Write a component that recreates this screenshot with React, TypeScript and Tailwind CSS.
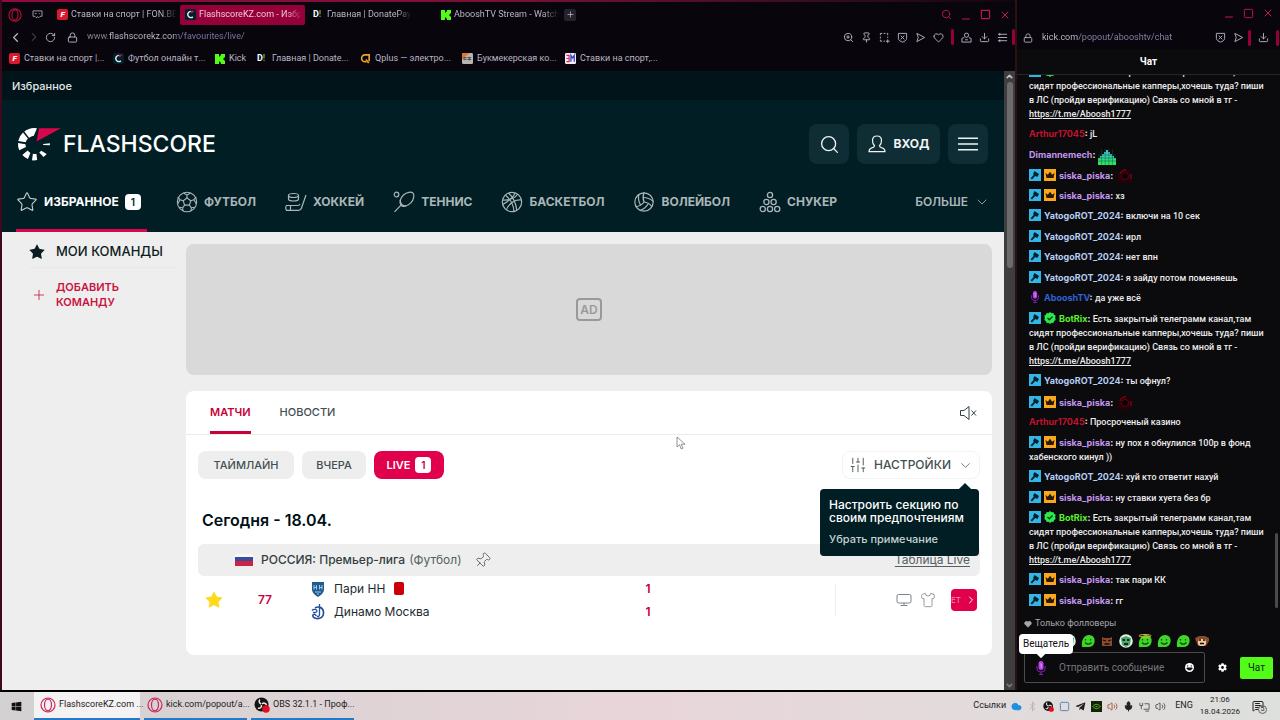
import type { ReactNode } from "react";
import {
  Bluetooth,
  ChevronDown,
  ChevronLeft,
  ChevronRight,
  ChevronUp,
  Cloud,
  Download,
  Heart,
  Lock,
  Menu,
  MessageSquareText,
  Mic,
  Minus,
  Pin,
  Plus,
  RotateCw,
  Search,
  Shirt,
  SlidersVertical,
  Square,
  Star,
  Volleyball,
  Volume2,
  X,
  ZoomIn,
} from "lucide-react";
import { FaCog, FaTelegramPlane, FaWindows } from "react-icons/fa";

/* ---------- small drawings ---------- */

function FonIcon() {
  return (
    <span className="grid size-[11px] shrink-0 place-items-center rounded-xs bg-[#d91a2e] text-[8px] leading-none font-black text-white italic">
      F
    </span>
  );
}

function FlashIcon() {
  return (
    <svg viewBox="0 0 12 12" className="size-[11px] shrink-0">
      <rect width="12" height="12" rx="2" fill="#00202a" />
      <path d="M8.6 8.6A3.4 3.4 0 1 1 6.4 2.6" fill="none" stroke="#dfe8ea" strokeWidth="1.6" />
      <path d="M6.5 2h4L7 5z" fill="#d5174f" />
    </svg>
  );
}

function DonateIcon() {
  return (
    <span className="flex w-[11px] shrink-0 text-[9px] leading-none font-bold text-white">
      D<span className="text-[#3fae6a]">!</span>
    </span>
  );
}

function KickIcon() {
  return (
    <svg viewBox="0 0 10 10" className="size-[10px] shrink-0" fill="#53fc18">
      <path d="M0 0h4v2.500h1V1.500h1V0h4v3.500H9v1H8v1h1v1h1V10H6V8.500H5v-1H4V10H0z" />
    </svg>
  );
}

function QplusIcon() {
  return (
    <svg viewBox="0 0 12 12" className="size-[11px] shrink-0" fill="none" stroke="#f0a32a" strokeWidth="1.800">
      <path d="M10 9V2H5.500a3.500 3.500 0 0 0 0 7.500H7" />
      <path d="M6.500 7l3 4" />
    </svg>
  );
}

function BookieIcon() {
  return (
    <svg viewBox="0 0 12 12" className="size-[11px] shrink-0">
      <rect width="12" height="12" rx="1.500" fill="#b9b4ae" />
      <path d="M0 1.500A1.500 1.500 0 0 1 1.500 0H8L0 7z" fill="#e2762c" />
      <path d="M2 5h3M2 7h3M6 5h4M6 7h4M2 5v2M8 5v3" stroke="#3d4250" strokeWidth="1" />
    </svg>
  );
}

function BetIcon() {
  return (
    <svg viewBox="0 0 12 12" className="size-[11px] shrink-0">
      <rect width="12" height="12" rx="1.500" fill="#f2eef8" />
      <path d="M1.500 2.500h3v7h-3M1.500 6h3" fill="none" stroke="#e0245a" strokeWidth="1.300" />
      <path d="M6.500 9.500v-7l1.800 3 1.800-3v7" fill="none" stroke="#3344c8" strokeWidth="1.400" />
    </svg>
  );
}

function OperaIcon({ className }: { className: string }) {
  return (
    <svg viewBox="0 0 16 16" className={className} fill="none" stroke="currentColor">
      <circle cx="8" cy="8" r="7" strokeWidth="1.200" />
      <ellipse cx="8" cy="8" rx="3.500" ry="5.800" strokeWidth="1.200" />
    </svg>
  );
}

function GamepadIcon() {
  return (
    <svg viewBox="0 0 12 10" className="h-[9px] w-[11px] text-[#aaa6b8]" fill="none" stroke="currentColor">
      <path d="M1 1h10v6H9L7.500 8.500 6 7.500 4.500 8.500 3 7H1z" />
      <path d="M3 4h2M8 3.500v1" />
    </svg>
  );
}

function FlashscoreMark() {
  return (
    <svg viewBox="0 0 44 34" className="h-[34px] w-11">
      <g fill="#fff">
        <path d="M20 1.200A16 16 0 0 0 7.300 4.500l4.800 6.200A8.500 8.500 0 0 1 16.800 8.700z" />
        <path d="M6 5.600A16 16 0 0 0 1.200 14l7.500 1.200a8.500 8.500 0 0 1 2.200-3.600z" />
        <path d="M1 15.900a16 16 0 0 0 1.300 7.400l6.700-3.200a8.500 8.500 0 0 1-.5-2.800z" />
        <path d="M5.300 28.100a16 16 0 0 0 5.600 4l2.500-6.200a9 9 0 0 1-2.800-2.300z" />
        <path d="M15 33.300a16 16 0 0 0 5.200-.2l-.8-6.300a9 9 0 0 1-3.500 0z" />
        <path d="M26.500 30a16 16 0 0 0 3.200-3l-5.400-3.200-2 1.800z" />
        <path d="M32.800 18.300l.1-2-6.700.7v1z" />
      </g>
      <path d="M22 1.200h22L19.500 14.500z" fill="#d8064a" />
    </svg>
  );
}

const iconClass = "size-[22px] shrink-0";

function FootballIcon() {
  return (
    <svg viewBox="0 0 22 22" className={iconClass} fill="none" stroke="currentColor" strokeWidth="1.100">
      <circle cx="11" cy="11" r="9.700" />
      <path d="M11 7l3.800 2.700-1.400 4.400H8.600L7.200 9.700z" />
      <path d="M11 7V4l3.500-2M11 4L7.500 2M14.800 9.700l3-1 2.500-2.700M17.800 8.700l2.600 4.300M13.400 14.100l2 2.700-.4 3.200M15.400 16.800l3.600-.6M8.600 14.100l-2 2.700.4 3.200M6.600 16.800L3 16.200M7.200 9.700l-3-1L1.700 6M4.200 8.700L1.500 13" />
    </svg>
  );
}

function HockeyIcon() {
  return (
    <svg viewBox="0 0 22 22" className={iconClass} fill="none" stroke="currentColor" strokeWidth="1.200">
      <ellipse cx="8.500" cy="4.500" rx="5" ry="2" />
      <path d="M3.500 4.500v3.500c0 1.100 2.200 2 5 2s5-.9 5-2V4.500" />
      <path d="M21 4l-4.500 13c-.5 1.500-1.500 2.300-3 2.300h-12c-1-1.800-.8-3.800 0-4.800h11.300c1.200 0 1.700-.5 2.200-1.500M5.500 14.500v4.800" />
    </svg>
  );
}

function TennisIcon() {
  return (
    <svg viewBox="0 0 22 22" className={iconClass} fill="none" stroke="currentColor" strokeWidth="1.200">
      <circle cx="3.500" cy="3.500" r="2.300" />
      <path d="M8 14.500c-2-3-.7-7.500 2.500-10.500s8-3.500 9.500-1.800 1 6.300-2 9.500-7.500 4.600-10 2.800z" />
      <path d="M7.200 9c0 3.500 2 5.800 6 6.200M8 14.200L1.500 20.800" />
    </svg>
  );
}

function BasketballIcon() {
  return (
    <svg viewBox="0 0 22 22" className={iconClass} fill="none" stroke="currentColor" strokeWidth="1.200">
      <circle cx="11" cy="11" r="9.700" />
      <path d="M7.500 2c4.500 4 7.500 10 8.300 17.500M4.500 4.200c5 4 8 9.500 8.500 16.200M1.500 9c5.500.5 12-1.500 15.500-6M14 1.800C13 6 7.500 10 1.800 13.500M20.500 9c-4-.5-7 .5-9.500 2.500-3 2.300-5 5-5.500 7.500" />
    </svg>
  );
}

function SnookerIcon() {
  return (
    <svg viewBox="0 0 22 22" className={iconClass} fill="none" stroke="currentColor" strokeWidth="1.300">
      <circle cx="11" cy="4" r="2.600" />
      <circle cx="7.400" cy="11" r="2.600" />
      <circle cx="14.600" cy="11" r="2.600" />
      <circle cx="3.800" cy="18" r="2.600" />
      <circle cx="11" cy="18" r="2.600" />
      <circle cx="18.200" cy="18" r="2.600" />
    </svg>
  );
}

function PersonIcon() {
  return (
    <svg viewBox="0 0 18 18" className="size-[18px]" fill="none" stroke="currentColor" strokeWidth="1.200">
      <path d="M6.500 10.800C5 9.500 4.500 7.500 4.500 5.500 4.500 2.800 6.300 1 9 1s4.500 1.800 4.500 4.500c0 2-.5 4-2 5.300 0 1 .5 1.400 2 1.900 2.500.7 3.500 1.500 3.500 4H1c0-2.500 1-3.300 3.500-4 1.500-.5 2-.9 2-1.900z" />
    </svg>
  );
}

function GavelBadge() {
  return (
    <svg viewBox="0 0 12 12" className="inline-block size-3 align-[-2px]">
      <rect width="12" height="12" fill="#35b5e5" />
      <path d="M5.500 2l4.500 3-1.700 3-2.100-1.100L3 10.400 1.600 9.200l3.200-3.500-.8-.7z" fill="#06212c" />
    </svg>
  );
}

function CrownBadge() {
  return (
    <svg viewBox="0 0 12 12" className="inline-block size-3 align-[-2px]">
      <rect width="12" height="12" fill="#f7a81c" />
      <path d="M1.500 4l2.300 1.800L6 2.800l2.200 3L10.500 4l-1 5h-7z" fill="#2b1600" />
    </svg>
  );
}

function VerifiedBadge() {
  return (
    <svg viewBox="0 0 12 12" className="inline-block size-3 align-[-2px]">
      <path
        d="M6 0l1.500 1.200L9.400 1l.6 1.700 1.600.9L11.200 6l.4 2-1.600 1.200L9.400 11l-1.900-.2L6 12l-1.500-1.200-1.900.2L2 9.200.4 8 .8 6 .4 3.600 2 2.700 2.600 1l1.900.2z"
        fill="#2bea4c"
      />
      <path d="M3.500 6l1.800 1.800L8.600 4.500" fill="none" stroke="#0a3c14" strokeWidth="1.300" />
    </svg>
  );
}

function MicBadge({ className }: { className: string }) {
  return (
    <svg viewBox="0 0 12 14" className={className}>
      <rect x="3.500" y="0" width="5" height="9" rx="2.500" fill="#b842e8" />
      <path d="M4.800 3h1.500v4" stroke="#e08cff" fill="none" />
      <path d="M2 5v2.500C2 9.500 4 11 6 11s4-1.500 4-3.500V5M6 11v3M4 13.500h4" stroke="#7a1fb0" fill="none" strokeWidth="1.200" />
    </svg>
  );
}

function EqualizerEmote() {
  return (
    <svg viewBox="0 0 18 16" className="inline-block h-4 w-[18px] align-[-7px]">
      <defs>
        <linearGradient id="eq" x1="0" y1="0" x2="0" y2="1">
          <stop offset="0" stopColor="#3fb8e8" />
          <stop offset="1" stopColor="#2bea4c" />
        </linearGradient>
      </defs>
      <path d="M0 9h2V7h2V5h2V3h2V1h2v2h2v2h2v2h2v2h2v7H0z" fill="url(#eq)" />
      <path d="M0 6h18M0 9h18M0 12h18M3.600 0v16M7.200 0v16M10.800 0v16M14.400 0v16" stroke="#0f5a44" strokeWidth=".5" />
    </svg>
  );
}

function RedEmote() {
  return (
    <svg viewBox="0 0 16 16" className="ml-[2px] inline-block size-4 align-[-5px]">
      <path d="M1 15C0 8 1 1 8 1s7 6 7 13l-3 1c-3-1-6-1-11 0z" fill="#2a0008" />
      <path d="M3 6c1-3 3-4.500 6-4M14 6v5" stroke="#8c0a20" fill="none" />
      <circle cx="8" cy="8" r="3.500" fill="#050002" stroke="#5c0616" />
    </svg>
  );
}

type EmoteKind = "face" | "mask" | "blob" | "brown" | "halo" | "monkey";

function BlobEmote({ kind }: { kind: EmoteKind }) {
  return (
    <svg viewBox="0 0 14 14" className="size-[14px] shrink-0">
      {kind === "face" && (
        <>
          <path d="M0 0h14v10H2z" fill="#8d2f2f" />
          <path d="M4 4h8v7H4z" fill="#f2c7b0" />
        </>
      )}
      {kind === "brown" && (
        <>
          <path d="M2 3l2 1h6l2-1v9H2z" fill="#8a4a2c" />
          <path d="M3 6l3 1M11 6L8 7M4.500 10h5" stroke="#1a0d05" strokeWidth="1.300" />
        </>
      )}
      {kind === "monkey" && (
        <>
          <path d="M0 4l4-2h6l4 2v3l-3 5H3L1 7z" fill="#8a4a2c" />
          <path d="M3 5h8v5l-2 2H5l-2-2z" fill="#f3c89e" />
          <path d="M3.500 6h2.500M8 6h2.500M5 9.500h4" stroke="#1a0d05" strokeWidth="1.500" />
        </>
      )}
      {(kind === "blob" || kind === "halo") && (
        <>
          <path d="M1 13C0 6 3 1 8 1s6 4 5.500 7-3 5-6 5z" fill="#3fd62a" />
          <path d="M4.500 5v1.500M9.500 5v1.500M4 8.500c2 2 4.500 2 6.500 0" stroke="#0b4a0a" fill="none" strokeWidth="1.200" />
        </>
      )}
      {kind === "halo" && <ellipse cx="7" cy="1.800" rx="6" ry="1.300" fill="none" stroke="#f0b23a" />}
      {kind === "mask" && (
        <>
          <circle cx="7" cy="7" r="6.800" fill="#e9f2ea" />
          <path d="M2 4l5-2 5 2-1 7-4 2-4-2z" fill="#3fae6a" />
          <path d="M3.500 6h2.500M8 6h2.500M5 10h4" stroke="#401228" strokeWidth="1.800" />
        </>
      )}
    </svg>
  );
}

function ObsIcon({ className }: { className: string }) {
  return (
    <svg viewBox="0 0 16 16" className={className}>
      <circle cx="7.500" cy="7.500" r="7" fill="#141414" />
      <path d="M7 7C5 6 4.500 4 6 2.500M8 7c1.500-1.500 4-1 4.500 1M7.500 8c.3 2.200-1.500 4-3.500 3" stroke="#e8e8e8" strokeWidth="1.500" fill="none" />
      <circle cx="12" cy="12" r="3.800" fill="#e01020" />
    </svg>
  );
}

function ShieldX() {
  return (
    <svg viewBox="0 0 12 12" className="size-[11px] shrink-0" fill="none" stroke="currentColor">
      <path d="M1.500 1.500h9V7c0 2-2.500 3.500-4.500 4C4 10.500 1.500 9 1.500 7zM4 4l4 4M8 4L4 8" />
    </svg>
  );
}

function FlowArrow() {
  return (
    <svg viewBox="0 0 12 12" className="size-[11px] shrink-0" fill="none" stroke="currentColor">
      <path d="M2 1.500L10.500 6 2 10.500 3.500 6z" />
    </svg>
  );
}

function SnapshotIcon() {
  return (
    <svg viewBox="0 0 12 12" className="size-[11px] shrink-0" fill="none" stroke="currentColor">
      <path d="M1.500 3.500v-2h2M5 1.500h2M8.500 1.500h1v2M9.500 5v1.500M1.500 5v2M1.500 8.500v1.500h2M5 10h1.500M9.500 8v4M7.500 10h4" />
    </svg>
  );
}

function PersonSmall() {
  return (
    <svg viewBox="0 0 12 12" className="size-[11px] shrink-0" fill="none" stroke="currentColor">
      <circle cx="6" cy="3.500" r="2.300" />
      <path d="M3.500 6L1 7v4h10V7L8.500 6M4.500 8.500h3" />
    </svg>
  );
}

function PanelMenuIcon() {
  return (
    <svg viewBox="0 0 12 12" className="size-[11px] shrink-0" fill="none" stroke="currentColor">
      <path d="M1 2.500h10M1 6h10M1 9.500h10M3 1v3M3 8v3" />
    </svg>
  );
}

/* ---------- left browser window ---------- */

function BrowserTab({ icon, label, active }: { icon: ReactNode; label: string; active?: boolean }) {
  return (
    <button
      className={
        active
          ? "flex h-5 w-[125px] items-center gap-[3px] rounded-xs bg-[#95003a] pl-[5px] text-[#f0c8d8]"
          : "flex h-5 w-[125px] items-center gap-[3px] pl-[5px] text-[#b9b5c6]"
      }
    >
      {icon}
      <span className="mask-r-from-85% whitespace-nowrap">{label}</span>
    </button>
  );
}

const bookmarks = [
  { icon: <FonIcon />, label: "Ставки на спорт |...", width: "w-[92px]" },
  { icon: <FlashIcon />, label: "Футбол онлайн т...", width: "w-[90px]" },
  { icon: <KickIcon />, label: "Kick", width: "w-[30px]" },
  { icon: <DonateIcon />, label: "Главная | Donate...", width: "w-[91px]" },
  { icon: <QplusIcon />, label: "Qplus — электро...", width: "w-[90px]" },
  { icon: <BookieIcon />, label: "Букмекерская ко...", width: "w-[91px]" },
  { icon: <BetIcon />, label: "Ставки на спорт,...", width: "w-[90px]" },
];

function BrowserChrome() {
  return (
    <div className="flex flex-col bg-[#08060c] pt-1 font-['Roboto','Liberation_Sans',sans-serif] text-[9px]">
      <div className="flex h-[21px] items-center pr-1 pl-[6px]">
        <div className="flex w-11 items-center gap-[10px]">
          <OperaIcon className="size-[14px] text-[#c0103e]" />
          <GamepadIcon />
        </div>
        <div className="flex flex-1 items-center gap-[3px]">
          <BrowserTab icon={<FonIcon />} label="Ставки на спорт | FON.BE" />
          <BrowserTab icon={<FlashIcon />} label="FlashscoreKZ.com - Избр" active />
          <BrowserTab icon={<DonateIcon />} label="Главная | DonatePay" />
          <BrowserTab icon={<KickIcon />} label="AbooshTV Stream - Watch" />
          <button aria-label="Новая вкладка" className="grid size-3 place-items-center rounded-xs bg-[#24222c] text-[#b9b5c6]">
            <Plus size={9} />
          </button>
        </div>
        <div className="flex items-center gap-2 text-[#c0184a]">
          <Search size={11} strokeWidth={2} />
          <Minus size={12} strokeWidth={2} className="translate-y-1" />
          <Square size={11} strokeWidth={2.500} />
          <X size={12} strokeWidth={2} />
        </div>
      </div>
      <div className="flex h-6 items-center pr-1 pl-[6px] text-[#b9b5c6]">
        <div className="flex w-[79px] shrink-0 items-center gap-1">
          <ChevronLeft size={15} />
          <ChevronRight size={14} className="text-[#3c3946]" />
          <RotateCw size={11} />
          <Lock size={11} className="ml-[7px]" />
        </div>
        <input
          aria-label="Адрес страницы"
          defaultValue="www.flashscorekz.com/favourites/live/"
          className="min-w-0 flex-1 bg-[linear-gradient(to_right,#8b8698_22px,#c4c0d0_22px,#c4c0d0_88px,#8078a6_88px)] bg-clip-text text-[9px] text-transparent outline-none"
        />
        <div className="flex items-center gap-[7px]">
          <ZoomIn size={11} />
          <Pin size={11} />
          <SnapshotIcon />
          <ShieldX />
          <FlowArrow />
          <Heart size={11} />
          <span className="h-4 w-[3px] rounded-xs bg-[#95003a]" />
          <PersonSmall />
          <Download size={11} />
          <PanelMenuIcon />
          <span className="-mr-1 -ml-[3px] h-4 w-[3px] rounded-xs bg-[#95003a]" />
        </div>
      </div>
      <div className="flex h-[22px] items-center gap-3 pr-2 pb-[3px] pl-[7px]">
        {bookmarks.map((b) => (
          <a key={b.label} href="#" className={`flex shrink-0 items-center gap-1 whitespace-nowrap text-[#b9b5c6] ${b.width}`}>
            {b.icon}
            {b.label}
          </a>
        ))}
      </div>
    </div>
  );
}

const sports = [
  { icon: <FootballIcon />, label: "ФУТБОЛ" },
  { icon: <HockeyIcon />, label: "ХОККЕЙ" },
  { icon: <TennisIcon />, label: "ТЕННИС" },
  { icon: <BasketballIcon />, label: "БАСКЕТБОЛ" },
  { icon: <Volleyball className={iconClass} strokeWidth={1.300} />, label: "ВОЛЕЙБОЛ" },
  { icon: <SnookerIcon />, label: "СНУКЕР" },
];

function SiteHeader() {
  return (
    <header className="bg-[#001e24] px-[14px] pt-6">
      <div className="flex h-10 items-center">
        <a href="#" className="flex items-center gap-[2px] pl-[1px] text-[23px] font-medium text-white">
          <FlashscoreMark />
          FLASHSCORE
        </a>
        <div className="ml-auto flex gap-2 pr-[2px] text-[#f0f4f5]">
          <button aria-label="Поиск" className="grid size-10 place-items-center rounded-lg bg-[#0f2d34]">
            <Search size={21} strokeWidth={1.500} />
          </button>
          <button className="flex h-10 w-[83px] items-center justify-center gap-2 rounded-lg bg-[#0f2d34] text-[12px] font-bold">
            <PersonIcon />
            ВХОД
          </button>
          <button aria-label="Меню" className="grid size-10 place-items-center rounded-lg bg-[#0f2d34]">
            <svg viewBox="0 0 20 14" className="h-[14px] w-5" stroke="currentColor" strokeWidth="1.500">
              <path d="M0 1.200h20M0 7h20M0 12.800h20" />
            </svg>
          </button>
        </div>
      </div>
      <nav className="flex h-[68px] gap-[29px] pt-2 text-[12px] font-bold text-[#aab6b9]">
        <a href="#" className="flex h-[60px] w-[131px] items-center gap-[6px] border-b-3 border-[#d8064a] pt-[3px] text-white">
          <Star className="size-[22px] shrink-0 text-[#c8d0d2]" strokeWidth={1.200} />
          ИЗБРАННОЕ
          <span className="grid size-4 shrink-0 place-items-center rounded-sm bg-white text-[10px] font-semibold text-[#001e24]">1</span>
        </a>
        {sports.map((s) => (
          <a key={s.label} href="#" className="flex h-[60px] items-center gap-[6px]">
            {s.icon}
            {s.label}
          </a>
        ))}
        <button className="ml-auto flex h-[60px] items-center gap-[6px] font-semibold">
          БОЛЬШЕ
          <ChevronDown size={16} strokeWidth={1.200} />
        </button>
      </nav>
    </header>
  );
}

function Sidebar() {
  return (
    <aside className="w-[148px] shrink-0">
      <a href="#" className="flex h-9 items-center gap-[10px] border-b border-[#e9e9e9] pt-1 text-[13px] font-medium text-[#0c1c20]">
        <Star size={18} className="fill-current" strokeWidth={0} />
        МОИ КОМАНДЫ
      </a>
      <a href="#" className="flex items-center gap-[9px] pt-3 pl-[3px] text-[11px] leading-[15px] font-semibold text-[#c8143f]">
        <Plus size={16} strokeWidth={1.200} />
        <span>
          ДОБАВИТЬ
          <br />
          КОМАНДУ
        </span>
      </a>
    </aside>
  );
}

function SettingsMenu() {
  return (
    <div className="relative ml-auto">
      <button className="flex h-7 w-[138px] items-center justify-center gap-[7px] rounded-lg border border-[#f3f3f3] text-[12px] font-medium text-[#444f52]">
        <SlidersVertical size={18} strokeWidth={1.200} />
        НАСТРОЙКИ
        <ChevronDown size={15} strokeWidth={1.200} />
      </button>
      <div role="tooltip" className="absolute top-[38px] right-[1px] z-10 w-[159px] rounded-sm bg-[#001e24] px-[9px] pt-[9px] pb-2 text-white">
        <span className="absolute -top-1 right-[9px] size-[10px] rotate-45 bg-[#001e24]" />
        <p className="text-[12px] leading-[13px] whitespace-nowrap">
          Настроить секцию по
          <br />
          своим предпочтениям
        </p>
        <button className="mt-[7px] text-[11px] leading-4 text-[#c8d0d2]">Убрать примечание</button>
      </div>
    </div>
  );
}

function Shield() {
  return (
    <svg viewBox="0 0 14 16" className="h-4 w-[14px]">
      <path d="M1 1h12v7c0 4-3 6-6 8-3-2-6-4-6-8z" fill="#1f5c94" />
      <path d="M3 4v4.500M5.500 4v4.500M3 6.500h2.500M8.500 4v4.500M11 4v4.500M8.500 6.500H11M5 10v2M7 10v4M9 10v2" stroke="#b8d4ea" strokeWidth=".9" />
    </svg>
  );
}

function DynamoLogo() {
  return (
    <svg viewBox="0 0 14 16" className="h-4 w-[14px]" fill="none" stroke="#22509c">
      <path d="M4 4c3-2 8-1 8.500 4s-3.500 7-7 6.500c-2.500-.4-4.500-2-3.500-3.500s3-.5 3 1" strokeWidth="1.600" />
      <path d="M8.500 0v10.500c0 2-1.500 2.500-2.500 1.500M1 6.500c1.500-2 5-1 5 .5S3.500 9 2 8" strokeWidth="1.300" />
    </svg>
  );
}

function MatchesCard() {
  return (
    <section className="mt-4 rounded-lg bg-white pb-[31px]">
      <div className="flex h-11 items-stretch gap-[29px] border-b border-[#ececec] pr-[15px] pl-6 text-[11px] font-semibold">
        <button className="border-b-3 border-[#c80037] pt-[3px] text-[#c80037]">МАТЧИ</button>
        <button className="font-medium text-[#444f52]">НОВОСТИ</button>
        <button aria-label="Звук" className="ml-auto text-[#333f42]">
          <svg viewBox="0 0 18 16" className="h-4 w-[18px]" fill="none" stroke="currentColor">
            <path d="M1.500 5.500H5l5-4v13l-5-4H1.500zM12.500 5.500l4.500 5M17 5.500l-4.500 5" />
          </svg>
        </button>
      </div>
      <div className="flex gap-2 px-3 pt-4 text-[11px] font-medium text-[#444f52]">
        <button className="h-7 w-24 rounded-lg bg-[#eee]">ТАЙМЛАЙН</button>
        <button className="h-7 w-16 rounded-lg bg-[#eee]">ВЧЕРА</button>
        <button className="flex h-7 w-[70px] items-center justify-center gap-[5px] rounded-lg bg-[#e0004b] font-semibold text-white">
          LIVE
          <span className="grid size-4 place-items-center rounded-sm bg-white text-[10px] text-[#c80037]">1</span>
        </button>
        <SettingsMenu />
      </div>
      <h2 className="px-4 pt-[29px] text-[16px] leading-6 font-semibold text-[#001016]">Сегодня - 18.04.</h2>
      <div className="px-3 pt-3">
        <div className="flex h-8 items-center rounded-md bg-[#eee] pr-[10px] pl-[37px] text-[12px] text-[#555e61]">
          <svg viewBox="0 0 18 12" className="mr-2 h-3 w-[18px]">
            <rect width="18" height="4" fill="#f7f7f7" />
            <rect y="3" width="18" height="5" fill="#3c4a9c" />
            <rect y="7" width="18" height="5" fill="#cc2244" />
          </svg>
          <span className="font-medium text-[#333f42]">РОССИЯ: Премьер-лига</span>
          <span className="ml-1">(Футбол)</span>
          <Pin size={17} strokeWidth={1.200} className="ml-3 rotate-45" />
          <a href="#" className="ml-auto underline underline-offset-2">
            Таблица Live
          </a>
        </div>
        <div className="flex h-12 items-center text-[12px] text-[#1c2b30]">
          <button aria-label="Избранный матч" className="grid w-8 place-items-center">
            <Star size={20} className="fill-[#ffd91c]" strokeWidth={0} />
          </button>
          <span className="w-[70px] text-center font-semibold text-[#c80037]">77</span>
          <div className="flex flex-1 flex-col gap-[7px] pl-[11px]">
            <div className="flex h-4 items-center gap-[9px]">
              <Shield />
              Пари НН
              <span className="h-[13px] w-[10px] rounded-xs bg-[#cc0008]" />
            </div>
            <div className="flex h-4 items-center gap-[9px]">
              <DynamoLogo />
              Динамо Москва
            </div>
          </div>
          <div className="flex w-10 flex-col gap-[7px] text-center leading-4 font-semibold text-[#c80037]">
            <span>1</span>
            <span>1</span>
          </div>
          <div className="w-[167px]" />
          <div className="flex h-8 w-[145px] items-center justify-end gap-2 border-l border-[#eee] pr-[3px] text-[#7d8588]">
            <svg viewBox="0 0 16 14" className="h-[14px] w-4" fill="none" stroke="currentColor">
              <rect x="1" y="1.500" width="14" height="8.500" rx="1.500" />
              <path d="M8 10v2.500M4.500 12.500h7" />
            </svg>
            <Shirt size={16} strokeWidth={1.200} />
            <button className="ml-[7px] flex h-[22px] w-[26px] items-center justify-between rounded-sm bg-[#e0004b] text-[8px] text-[#f58ab0]">
              ET
              <ChevronRight size={12} className="text-white" />
            </button>
          </div>
        </div>
      </div>
    </section>
  );
}

function Scrollbar() {
  return (
    <div className="flex w-[11px] shrink-0 flex-col items-center bg-[#3e3e3e]">
      <ChevronUp size={9} strokeWidth={4} className="my-[1px] shrink-0 text-[#c8c8c8]" />
      <div className="h-3/10 w-[6px] rounded-full bg-[#6c6c6c]" />
      <ChevronDown size={9} strokeWidth={4} className="mt-auto shrink-0 text-[#7c7c7c]" />
    </div>
  );
}

function FlashscoreWindow() {
  return (
    <div className="flex min-w-0 flex-1 flex-col border-l-2 border-[#3d0a1e] bg-black">
      <div className="z-10 h-[2px] shrink-0 bg-linear-to-r from-[#8f0a40] via-[#7a1038] to-[#12060c]" />
      <div className="-mt-[2px] flex min-h-0 flex-1 flex-col">
        <BrowserChrome />
        <div className="flex min-h-0 flex-1">
          <div className="flex min-w-0 flex-1 flex-col overflow-hidden">
            <h1 className="h-[29px] shrink-0 bg-[#00141a] px-[10px] text-[11px] leading-[30px] font-medium text-[#e2e6e7]">Избранное</h1>
            <SiteHeader />
            <div className="flex flex-1 gap-[10px] bg-[#eee] pr-3 pl-[26px]">
              <Sidebar />
              <main className="min-w-0 flex-1 pt-3">
                <div className="grid h-[131px] place-items-center rounded-lg bg-[#d9d9d9]">
                  <span className="grid h-[23px] w-[26px] place-items-center rounded-sm border-2 border-[#999] text-[12px] font-semibold text-[#999]">AD</span>
                </div>
                <MatchesCard />
              </main>
            </div>
          </div>
          <Scrollbar />
        </div>
      </div>
    </div>
  );
}

/* ---------- chat window ---------- */

type User = "Arthur" | "Dima" | "siska" | "Yatogo" | "Aboosh" | "Bot";

const users: Record<User, { name: string; color: string; badges: ReactNode[] }> = {
  Arthur: { name: "Arthur17045", color: "text-[#c4122e]", badges: [] },
  Dima: { name: "Dimannemech", color: "text-[#c397f0]", badges: [] },
  siska: { name: "siska_piska", color: "text-[#c397f0]", badges: [<GavelBadge key="g" />, <CrownBadge key="c" />] },
  Yatogo: { name: "YatogoROT_2024", color: "text-[#b4cdf5]", badges: [<GavelBadge key="g" />] },
  Aboosh: { name: "AbooshTV", color: "text-[#2f63d8]", badges: [<MicBadge key="m" className="inline-block size-3 align-[-2px]" />] },
  Bot: { name: "BotRix", color: "text-[#58f52c]", badges: [<GavelBadge key="g" />, <VerifiedBadge key="v" />] },
};

const promo = (
  <>
    Есть закрытый телеграмм канал,там
    <br />
    сидят профессиональные капперы,хочешь туда? пиши
    <br />в ЛС (пройди верификацию) Связь со мной в тг -
    <br />
    <a href="https://t.me/Aboosh1777" className="underline">
      https://t.me/Aboosh1777
    </a>
  </>
);

const messages: { user: User; body: ReactNode; height?: string }[] = [
  { user: "Bot", body: promo, height: "-mt-[10px] h-14" },
  { user: "Arthur", body: "jL" },
  { user: "Dima", body: <EqualizerEmote /> },
  { user: "siska", body: <RedEmote /> },
  { user: "siska", body: "хз" },
  { user: "Yatogo", body: "включи на 10 сек" },
  { user: "Yatogo", body: "ирл" },
  { user: "Yatogo", body: "нет впн" },
  { user: "Yatogo", body: "я зайду потом поменяешь" },
  { user: "Aboosh", body: "да уже всё" },
  { user: "Bot", body: promo, height: "h-14" },
  { user: "Yatogo", body: "ты офнул?" },
  { user: "siska", body: <RedEmote /> },
  { user: "Arthur", body: "Просроченый казино" },
  {
    user: "siska",
    body: (
      <>
        ну пох я обнулился 100р в фонд
        <br />
        хабенского кинул ))
      </>
    ),
    height: "h-7",
  },
  { user: "Yatogo", body: "хуй кто ответит нахуй" },
  { user: "siska", body: "ну ставки хуета без бр" },
  { user: "Bot", body: promo, height: "h-14" },
  { user: "siska", body: "так пари КК" },
  { user: "siska", body: "гг" },
];

function Message({ user, body, height = "h-[14px]" }: { user: User; body: ReactNode; height?: string }) {
  const u = users[user];
  return (
    <li className={`shrink-0 text-[9px] leading-[14px] font-medium whitespace-nowrap text-[#ececec] ${height}`}>
      {u.badges.map((badge, i) => (
        <span key={i} className="mr-[3px]">
          {badge}
        </span>
      ))}
      <span className="font-['Inter','Liberation_Sans',sans-serif] font-bold">
        <span className={u.color}>{u.name}</span>:
      </span>{" "}
      {body}
    </li>
  );
}

const quickEmotes: EmoteKind[] = ["face", "mask", "blob", "brown", "mask", "halo", "blob", "blob", "monkey"];

function ChatWindow() {
  return (
    <div className="flex w-[265px] shrink-0 flex-col border-l-2 border-[#2a1114] bg-[#0b0a0c] font-['Roboto','Liberation_Sans',sans-serif]">
      <div className="flex h-[26px] shrink-0 items-center justify-end gap-2 bg-[#08060c] pr-[6px] text-[#c0184a]">
        <Minus size={12} className="translate-y-1" />
        <Square size={11} />
        <X size={12} />
      </div>
      <div className="flex h-[23px] shrink-0 items-center gap-[7px] bg-[#08060c] pr-[1px] pl-[6px] text-[#b9b5c6]">
        <Lock size={10} />
        <input
          aria-label="Адрес чата"
          defaultValue="kick.com/popout/abooshtv/chat"
          className="min-w-0 flex-1 bg-[linear-gradient(to_right,#c4c0d0_38px,#8b84a8_38px)] bg-clip-text pl-[2px] text-[9px] text-transparent outline-none"
        />
        <ShieldX />
        <FlowArrow />
        <span className="-ml-[3px] h-4 w-[3px] rounded-xs bg-[#95003a]" />
        <Download size={11} />
        <span className="h-4 w-[3px] rounded-xs bg-[#95003a]" />
      </div>
      <h2 className="h-[26px] shrink-0 border-b border-[#26262a] text-center text-[10px] leading-[26px] font-bold text-white">Чат</h2>
      <div className="flex min-h-0 flex-1">
        <ul className="flex min-h-0 flex-1 flex-col justify-between overflow-hidden pl-3">
          {messages.map((m, i) => (
            <Message key={i} user={m.user} body={m.body} height={m.height} />
          ))}
        </ul>
        <div className="mr-[2px] flex w-[3px] flex-col justify-end">
          <div className="h-[14%] rounded-full bg-[#4a4a4c]" />
        </div>
      </div>
      <div className="flex h-[30px] shrink-0 items-center gap-[3px] pt-[2px] pl-[7px] text-[9px] text-[#a8a8ac]">
        <Heart size={8} className="fill-current" />
        Только фолловеры
      </div>
      <div className="-mt-[7px] mb-[1px] flex h-5 shrink-0 items-center gap-[5px] pl-[26px]">
        {quickEmotes.map((kind, i) => (
          <BlobEmote key={i} kind={kind} />
        ))}
      </div>
      <div className="mb-[7px] flex h-[31px] shrink-0 items-center px-[7px]">
        <div className="relative flex h-[31px] w-[181px] items-center gap-3 rounded-xs border border-[#4c4c50] px-[10px]">
          <MicBadge className="h-[14px] w-3 shrink-0" />
          <span role="tooltip" className="absolute -top-[19px] -left-[6px] z-10 rounded-sm bg-white px-1 text-[10px] leading-5 text-[#111]">
            Вещатель
            <span className="absolute -bottom-[3px] left-[19px] size-[6px] rotate-45 bg-white" />
          </span>
          <input
            aria-label="Сообщение"
            placeholder="Отправить сообщение"
            className="min-w-0 flex-1 bg-transparent text-[10px] outline-none placeholder:text-[#77777b]"
          />
          <button aria-label="Эмодзи" className="shrink-0">
            <svg viewBox="0 0 10 10" className="size-[9px]">
              <circle cx="5" cy="5" r="5" fill="#fff" />
              <path d="M2 5.500h6C7.500 8.500 2.500 8.500 2 5.500zM3 2.500v1.500M7 2.500v1.500" fill="#111" stroke="#111" />
            </svg>
          </button>
        </div>
        <button aria-label="Настройки чата" className="mx-auto text-white">
          <FaCog size={9} />
        </button>
        <button className="h-[22px] w-[33px] rounded-xs bg-[#53fc18] text-[10px] text-[#0b2a05]">Чат</button>
      </div>
    </div>
  );
}

/* ---------- taskbar ---------- */

function TaskButton({ icon, label, active }: { icon: ReactNode; label: string; active?: boolean }) {
  return (
    <button
      className={
        active
          ? "flex h-7 w-[106px] items-center gap-[3px] border-b-2 border-[#2878c8] bg-[#f4f2f2] px-[6px] text-[9px] whitespace-nowrap text-[#222]"
          : "flex h-7 w-[103px] items-center gap-[3px] border-b-2 border-[#2878c8] px-[3px] text-[9px] whitespace-nowrap text-[#222]"
      }
    >
      {icon}
      {label}
    </button>
  );
}

function Taskbar() {
  return (
    <footer className="flex h-7 shrink-0 items-center bg-linear-to-r from-[#d3d1d1] via-[#e8d5da] to-[#dde0dd] font-['Roboto','Liberation_Sans',sans-serif]">
      <button aria-label="Пуск" className="grid h-7 w-[34px] place-items-center pr-[2px] text-[#111]">
        <FaWindows size={11} />
      </button>
      <div className="flex gap-1">
        <TaskButton active icon={<OperaIcon className="size-4 shrink-0 text-[#c8285a]" />} label="FlashscoreKZ.com ..." />
        <TaskButton icon={<OperaIcon className="size-4 shrink-0 text-[#c8285a]" />} label="kick.com/popout/a..." />
        <TaskButton icon={<ObsIcon className="size-4 shrink-0" />} label="OBS 32.1.1 - Проф..." />
      </div>
      <div className="ml-auto flex items-center gap-[5px] pr-4 text-[8px] text-[#222]">
        <span className="text-[9px]">Ссылки</span>
        <Cloud size={11} className="fill-[#1e90e0] text-[#1e90e0]" />
        <Bluetooth size={11} className="text-[#b4b4b8]" />
        <ObsIcon className="size-[11px]" />
        <Square size={11} strokeDasharray="3 2" className="text-[#3f78b8]" />
        <FaTelegramPlane size={11} />
        <svg viewBox="0 0 12 12" className="size-[11px]">
          <rect width="12" height="12" fill="#10240a" />
          <path d="M2 6c2-3 6-3 8 0-2 3-6 3-8 0zM5 6h2" fill="none" stroke="#7ac21c" />
        </svg>
        <Volume2 size={11} className="text-[#a0563a]" />
        <Mic size={11} className="fill-current" />
        <svg viewBox="0 0 12 12" className="size-[11px]" fill="none" stroke="#555">
          <path d="M1 2v3h3V2M2.500 5v4M6 3h5v6H5M7 11h4" />
        </svg>
        <Volume2 size={11} strokeWidth={1.500} />
        <span className="ml-1 text-[9px]">ENG</span>
        <span className="ml-[2px] text-center leading-[12px]">
          21:06
          <br />
          18.04.2026
        </span>
        <span className="relative ml-[7px]">
          <MessageSquareText size={12} />
          <span className="absolute top-[5px] left-[6px] grid size-[9px] place-items-center rounded-full border border-[#666] bg-[#dcdcdc] text-[7px] leading-none">5</span>
        </span>
      </div>
    </footer>
  );
}

export default function App() {
  return (
    <div className="relative flex h-screen flex-col bg-black font-['Inter','Liberation_Sans',sans-serif]">
      <div className="flex min-h-0 flex-1 pb-[2px]">
        <FlashscoreWindow />
        <ChatWindow />
      </div>
      <Taskbar />
      <svg viewBox="0 0 10 14" className="pointer-events-none absolute top-[436px] left-[676px] h-[14px] w-[10px]" fill="#fff" stroke="#777" strokeWidth=".8">
        <path d="M1 1v10l2.500-2.300L5.200 13l1.800-.8-1.800-4H9z" />
      </svg>
    </div>
  );
}
